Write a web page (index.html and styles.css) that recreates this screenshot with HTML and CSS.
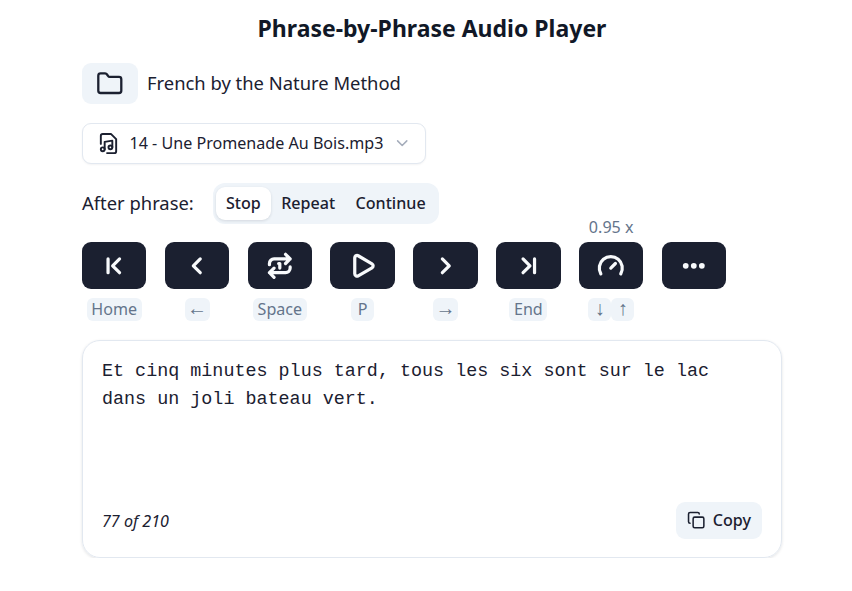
FILE: index.html
```html
<!DOCTYPE html>
<html lang="en">
<head>
<meta charset="utf-8">
<title>Phrase-by-Phrase Audio Player</title>
<link rel="stylesheet" href="styles.css">
</head>
<body>
<main class="player">
  <h1 class="title">Phrase-by-Phrase Audio Player</h1>
  <div class="folder-row">
    <button class="folder-btn" aria-label="Open folder"><svg class="icon" viewBox="0 0 24 24"><path d="M20 20a2 2 0 0 0 2-2V8a2 2 0 0 0-2-2h-7.9a2 2 0 0 1-1.69-.9L9.6 3.9A2 2 0 0 0 7.93 3H4a2 2 0 0 0-2 2v13a2 2 0 0 0 2 2Z"/></svg></button>
    <span class="folder-name">French by the Nature Method</span>
  </div>
  <button class="file-select">
    <svg class="icon icon-file" viewBox="0 0 24 24"><circle cx="14" cy="16" r="2"/><circle cx="6" cy="18" r="2"/><path d="M4 12.4V4a2 2 0 0 1 2-2h8.5L20 7.500V20a2 2 0 0 1-2 2h-7.500"/><path d="M8 18v-7.700L16 9v7"/></svg>
    <span class="file-name">14 - Une Promenade Au Bois.mp3</span>
    <svg class="icon icon-caret" viewBox="0 0 24 24"><path d="m6 9 6 6 6-6"/></svg>
  </button>
  <div class="mode-row">
    <span class="mode-label">After phrase:</span>
    <div class="tabs"><button class="tab active">Stop</button><button class="tab">Repeat</button><button class="tab">Continue</button></div>
  </div>
  <div class="controls">
    <div class="control"><button class="btn" aria-label="First"><svg class="icon bold" viewBox="0 0 24 24"><path d="m17 18-6-6 6-6M7 6v12"/></svg></button><div class="keys"><kbd>Home</kbd></div></div>
    <div class="control"><button class="btn" aria-label="Previous"><svg class="icon bold" viewBox="0 0 24 24"><path d="m15 18-6-6 6-6"/></svg></button><div class="keys"><kbd class="arrow wide">←</kbd></div></div>
    <div class="control"><button class="btn" aria-label="Repeat"><svg class="icon bold" viewBox="0 0 24 24"><path d="m17 2 4 4-4 4M3 11v-1a4 4 0 0 1 4-4h14M7 22l-4-4 4-4M21 13v1a4 4 0 0 1-4 4H3M11 10h1v4"/></svg></button><div class="keys"><kbd>Space</kbd></div></div>
    <div class="control"><button class="btn" aria-label="Play"><svg class="icon bold" viewBox="0 0 24 24"><path d="M5 5a2 2 0 0 1 3.008-1.728l11.997 6.998a2 2 0 0 1 .003 3.458l-12 7A2 2 0 0 1 5 19z"/></svg></button><div class="keys"><kbd>P</kbd></div></div>
    <div class="control"><button class="btn" aria-label="Next"><svg class="icon bold" viewBox="0 0 24 24"><path d="m9 18 6-6-6-6"/></svg></button><div class="keys"><kbd class="arrow wide">→</kbd></div></div>
    <div class="control"><button class="btn" aria-label="Last"><svg class="icon bold" viewBox="0 0 24 24"><path d="m7 18 6-6-6-6M17 6v12"/></svg></button><div class="keys"><kbd>End</kbd></div></div>
    <div class="control"><span class="speed">0.95 x</span><button class="btn" aria-label="Speed"><svg class="icon bold" viewBox="0 0 24 24"><path d="m12 14 4-4M3.340 19a10 10 0 1 1 17.320 0"/></svg></button><div class="keys"><kbd class="arrow">↓</kbd><kbd class="arrow">↑</kbd></div></div>
    <div class="control"><button class="btn" aria-label="More"><svg class="icon dots" viewBox="0 0 24 24"><circle cx="12" cy="12" r="2.500"/><circle cx="19" cy="12" r="2.500"/><circle cx="5" cy="12" r="2.500"/></svg></button></div>
  </div>
  <section class="card">
    <p class="phrase">Et cinq minutes plus tard, tous les six sont sur le lac dans un joli bateau vert.</p>
    <div class="card-foot">
      <em class="count">77 of 210</em>
      <button class="copy"><svg class="icon icon-copy" viewBox="0 0 24 24"><rect x="8" y="8" width="14" height="14" rx="2"/><path d="M4 16c-1.100 0-2-.9-2-2V4c0-1.100.9-2 2-2h10c1.100 0 2 .9 2 2"/></svg>Copy</button>
    </div>
  </section>
</main>
</body>
</html>
```
FILE: styles.css
```css
* { box-sizing: border-box; }
body { margin: 0; background: #fff; color: #1b2030; font-family: "Noto Sans", sans-serif; }
button { border: 0; padding: 0; font: inherit; color: inherit; }
.player { width: 700px; margin-left: 82px; padding-top: 12px; }
.title { margin: 0; font-size: 23px; line-height: 32px; font-weight: 700; text-align: center; color: #111827; }
.icon { width: 27.6px; height: 27.6px; fill: none; stroke: currentColor; stroke-width: 2; stroke-linecap: round; stroke-linejoin: round; flex: none; }
.bold { stroke-width: 2.8; }
.dots { fill: currentColor; stroke: none; }
.folder-row { display: flex; align-items: center; gap: 9px; margin-top: 19px; height: 41px; }
.folder-btn { display: flex; align-items: center; justify-content: center; width: 56px; height: 41px; border-radius: 9px; background: #eff4f9; }
.folder-name, .mode-label { font-size: 18.4px; padding-bottom: 2px; }
.file-select { display: flex; align-items: center; width: 344px; height: 41px; margin-top: 19px; padding: 0 14px; background: #fff; border: 1px solid #e2e8f0; border-radius: 9px; box-shadow: 0 1px 2px rgba(15, 23, 42, .05); font-size: 16.1px; }
.icon-file { width: 23px; height: 23px; }
.file-name { margin-left: 9.5px; padding-bottom: 1px; white-space: nowrap; }
.icon-caret { width: 18.4px; height: 18.4px; margin-left: auto; color: #a5adbb; }
.mode-row { display: flex; align-items: center; gap: 19px; height: 41px; margin-top: 19px; }
.tabs { display: flex; align-items: center; width: 226px; height: 41px; padding: 3px; border-radius: 12px; background: #eff4f9; }
.tab { height: 33px; padding: 0 10.2px 1px; border-radius: 9px; background: none; font-size: 16.1px; font-weight: 500; }
.tab.active { background: #fff; box-shadow: 0 1px 3px rgba(15, 23, 42, .12); }
.controls { display: flex; gap: 18.4px; margin-top: 18.4px; height: 80px; }
.control { position: relative; width: 64.45px; }
.btn { display: flex; align-items: center; justify-content: center; width: 100%; height: 46.4px; border-radius: 9px; background: #1b2030; color: #f8fafc; }
.speed { position: absolute; left: 0; right: 0; top: -26px; text-align: center; font-size: 16.1px; line-height: 23px; color: #64748b; }
.keys { display: flex; justify-content: center; margin-top: 9.6px; }
kbd { min-width: 23px; height: 23px; padding: 0 4.6px; border-radius: 6px; background: #eff4f9; color: #64748b; font-family: "Noto Sans", sans-serif; font-size: 16.1px; line-height: 22px; text-align: center; }
.arrow { padding: 0; font-family: "Liberation Sans", sans-serif; font-size: 20px; line-height: 21px; }
.wide { width: 25px; }
.card { display: flex; flex-direction: column; justify-content: space-between; height: 218px; margin-top: 17.2px; padding: 17px 19px 18px; border: 1px solid #e2e8f0; border-radius: 18px; box-shadow: 0 1px 3px rgba(15, 23, 42, .12); }
.phrase { margin: 0; font-family: "Liberation Mono", monospace; font-size: 18.4px; line-height: 28px; }
.card-foot { display: flex; align-items: center; justify-content: space-between; }
.count { padding-top: 2px; font-size: 16.1px; }
.copy { display: flex; align-items: center; gap: 7px; height: 37px; padding: 0 11px; border-radius: 9px; background: #eff4f9; font-size: 16.1px; font-weight: 500; }
.icon-copy { width: 18.4px; height: 18.4px; }
```
